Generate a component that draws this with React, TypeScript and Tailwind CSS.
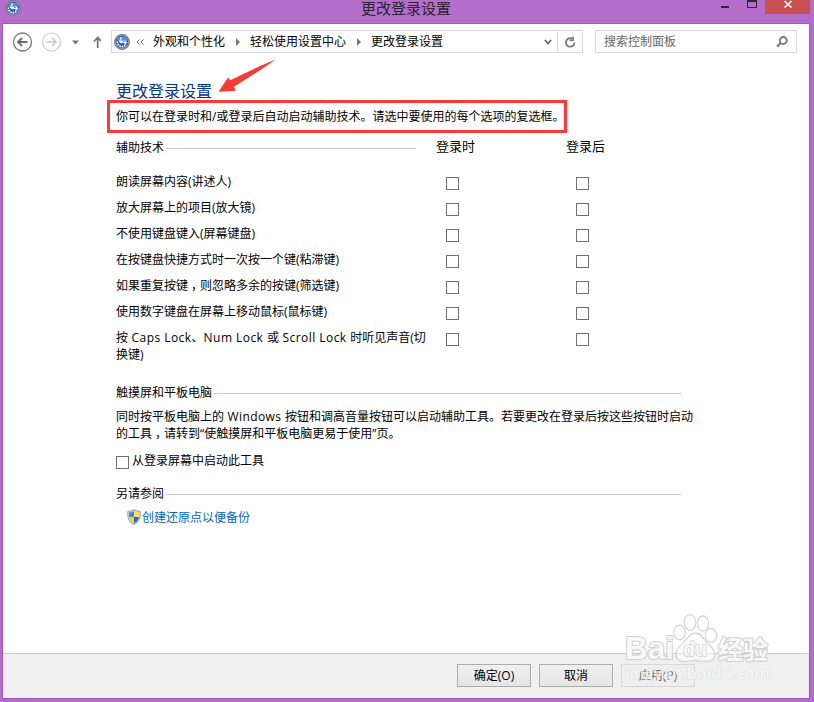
import type { ReactNode } from "react";

function Orb({ className }: { className: string }) {
  return (
    <svg viewBox="0 0 16 16" className={className}>
      <circle cx="8" cy="8" r="7.4" fill="#b9bbc0" stroke="#74777e" strokeWidth="1.1" />
      <circle cx="8" cy="8" r="6" fill="#2b5fd0" stroke="#1f4bb0" strokeWidth=".6" />
      <path d="M2.700 7A5.400 5.400 0 0 1 13.300 7Q8 4.500 2.700 7Z" fill="#5f8ee6" />
      <path d="M3.400 7.500A4.600 4.600 0 0 0 11.500 11" fill="none" stroke="#fff" strokeWidth="1.500" strokeDasharray="1.700 .7" />
      <path d="M7 3V8.500M5 6.500l2.200 2.200L9.500 6.500M8.500 8.500h4.500M10.500 6.500l2 2-2 2" fill="none" stroke="#fff" strokeWidth="1.200" />
    </svg>
  );
}

function Shield() {
  return (
    <svg viewBox="0 0 14 16" className="-mt-0.5 h-4 w-3.5 shrink-0">
      <path d="M7 .6C5 2 3 2.3.8 2.4 .5 8 1.3 13 7 15.5 12.7 13 13.5 8 13.2 2.4 11 2.3 9 2 7 .6Z" fill="#d3d8dd" stroke="#8b9299" strokeWidth=".9" />
      <path d="M7 2C5.400 3 4 3.400 2.100 3.500V8H7Z" fill="#3d8be0" />
      <path d="M7 2C8.600 3 10 3.400 11.900 3.500V8H7Z" fill="#fde04a" />
      <path d="M2.100 8H7v6.200C4 12.800 2.400 11 2.100 8Z" fill="#fbd02a" />
      <path d="M11.900 8H7v6.200C10 12.800 11.600 11 11.900 8Z" fill="#1f6ccb" />
    </svg>
  );
}

function Box() {
  return <span className="block size-[13px] shrink-0 border border-[#707070] bg-white" />;
}

function Section({ title, className }: { title: string; className: string }) {
  return (
    <div className={`flex h-4 items-center ${className}`}>
      <span className="-mt-0.5 whitespace-nowrap">{title}</span>
      <span className="ml-0.5 mt-px h-px flex-1 bg-[#cbcbcb]" />
    </div>
  );
}

function Crumb({ children, className }: { children: ReactNode; className: string }) {
  return <span className={`-mt-px whitespace-nowrap ${className}`}>{children}</span>;
}

function Arrow({ className }: { className: string }) {
  return (
    <svg viewBox="0 0 4 8" className={`h-2 w-1 shrink-0 ${className}`}>
      <path d="M0 0l4 4-4 4Z" fill="#777" />
    </svg>
  );
}

function Comma() {
  return <span className="ml-[3px] -mr-[3px]">，</span>;
}

const options: { id: string; label: ReactNode }[] = [
  { id: "narrator", label: "朗读屏幕内容(讲述人)" },
  { id: "magnifier", label: "放大屏幕上的项目(放大镜)" },
  { id: "keyboard", label: "不使用键盘键入(屏幕键盘)" },
  { id: "sticky", label: "在按键盘快捷方式时一次按一个键(粘滞键)" },
  { id: "filter", label: <>如果重复按键<Comma />则忽略多余的按键(筛选键)</> },
  { id: "mouse", label: "使用数字键盘在屏幕上移动鼠标(鼠标键)" },
];

const dialogButton =
  "flex h-[23px] w-[74px] items-center justify-center border border-[#acacac] bg-linear-to-b from-[#f0f0f0] to-[#e5e5e5]";

function Watermark() {
  return (
    <svg viewBox="0 0 155 90" className="pointer-events-none absolute left-[620px] top-[605px] h-[90px] w-[155px]">
      <g fill="#fff" fillOpacity=".55" stroke="#d6d6d6" strokeWidth="1.300">
        <ellipse cx="59.500" cy="27.500" rx="5.700" ry="7.300" />
        <ellipse cx="70" cy="17.500" rx="5.700" ry="7.800" />
        <ellipse cx="83" cy="18.500" rx="5.700" ry="7.500" />
        <ellipse cx="91" cy="30.500" rx="5.700" ry="7" />
        <path d="M75.500 28C69 28 67 35 61 40 55 45 54 54 61 56 66 57.500 70 55.500 75.500 55.500S85 57.500 90 56C97 54 96 45 89 40 84 35 82 28 75.500 28Z" />
      </g>
      <g fontFamily="'Liberation Sans', Arial, sans-serif" fontWeight="bold" fill="#f8f8f8" stroke="#d2d2d2" strokeWidth="2.200" strokeLinejoin="round" paintOrder="stroke">
        <text x="5" y="54" fontSize="32" textLength="49" lengthAdjust="spacingAndGlyphs">Bai</text>
        <text x="63" y="51" fontSize="20" textLength="24" lengthAdjust="spacingAndGlyphs" strokeWidth="1.600">du</text>
        <text x="98" y="53.500" fontSize="25" textLength="50" fontFamily="'Noto Sans CJK SC', sans-serif">经验</text>
      </g>
      <text x="5" y="74" fontSize="16" textLength="145" lengthAdjust="spacingAndGlyphs" fontFamily="'Open Sans', sans-serif" fontWeight="600" fill="#fff" fillOpacity=".65" stroke="#d0d0d0" strokeOpacity=".45" strokeWidth="1.200" paintOrder="stroke">jingyan.baidu.com</text>
    </svg>
  );
}

export default function App() {
  return (
    <div className="relative flex h-[702px] w-[814px] flex-col overflow-hidden bg-[#b46dcb] font-['Open_Sans','Noto_Sans_CJK_SC',sans-serif] text-[12px] leading-[17px] text-black">
      <header className="flex h-[23px] shrink-0">
        <Orb className="ml-[5px] mt-0 size-4 shrink-0" />
        <h1 className="ml-[340px] h-[18px] w-[92px] shrink-0 whitespace-nowrap text-[15px] leading-[16px] text-[#2b2330]">更改登录设置</h1>
        <svg viewBox="0 0 44 14" className="ml-[267px] h-[14px] w-11 shrink-0">
          <path d="M1 6h8v2H1Z" fill="#2a2a2a" />
          <path d="M27.500 0h9v7.500h-9Z" fill="none" stroke="#2a2a2a" />
          <path d="M27 0h10v2H27Z" fill="#2a2a2a" />
        </svg>
        <div className="ml-px flex h-[14px] w-[45px] shrink-0 justify-center bg-[#c75050]">
          <svg viewBox="0 0 10 10" className="h-[10px] w-[10px]">
            <path d="M1.500 1l7 6.500M8.500 1l-7 6.500" stroke="#fff" strokeWidth="1.700" />
          </svg>
        </div>
      </header>

      <div className="ml-0.5 flex h-[676px] w-[808px] shrink-0 flex-col border border-[#9d59b5] bg-white">
        <nav className="flex h-[29px] shrink-0 items-end">
          <svg viewBox="0 0 98 22" className="h-[22px] w-[98px] shrink-0" fill="none">
            <circle cx="19.500" cy="11" r="9" stroke="#777" strokeWidth="1.300" />
            <path d="M24.500 11h-9M19 7l-4 4 4 4" stroke="#6b6b6b" strokeWidth="1.900" />
            <circle cx="48.500" cy="11" r="9" stroke="#ccc" strokeWidth="1.200" />
            <path d="M43.500 11h9M49 7l4 4-4 4" stroke="#ccc" strokeWidth="1.700" />
            <path d="M69 9.500h7l-3.500 4Z" fill="#777" />
            <path d="M94.700 17V7M90.900 10.500L94.700 6.500 98 10" stroke="#777" strokeWidth="1.800" />
          </svg>
          <div className="ml-[10px] flex h-[23px] w-[472px] items-center border border-[#d9d9d9]">
            <Orb className="ml-0.5 size-4 shrink-0" />
            <svg viewBox="0 0 8 6" className="ml-1.5 h-1.5 w-2 shrink-0" fill="none" stroke="#666">
              <path d="M3.500.5L1 3l2.500 2.500M7.500.5L5 3l2.500 2.500" />
            </svg>
            <Crumb className="ml-[9px] w-[73px]">外观和个性化</Crumb>
            <Arrow className="ml-[10px]" />
            <Crumb className="ml-[10px] w-[97px]">轻松使用设置中心</Crumb>
            <Arrow className="ml-[10px]" />
            <Crumb className="ml-[10px]">更改登录设置</Crumb>
            <svg viewBox="0 0 8 6" className="ml-auto mr-[5px] h-1.5 w-2 shrink-0">
              <path d="M.8 1L4 4.400 7.200 1" fill="none" stroke="#666" strokeWidth="1.700" />
            </svg>
            <div className="flex h-full w-[25px] items-center justify-center border-l border-[#d9d9d9]">
              <svg viewBox="0 0 12 12" className="size-3" fill="none" stroke="#777" strokeWidth="1.700">
                <path d="M8.500 2.800A4.300 4.300 0 1 0 10.500 6.500" />
                <path d="M5.500 4.300H9.200V.5" strokeWidth="1.500" />
              </svg>
            </div>
          </div>
          <div className="ml-3 flex h-[23px] w-[202px] items-center justify-between border border-[#d9d9d9] pl-2 pr-2 text-[#666]">
            <span>搜索控制面板</span>
            <svg viewBox="0 0 12 12" className="size-3" fill="none" stroke="#777">
              <circle cx="7.300" cy="4.500" r="3.500" strokeWidth="1.800" />
              <path d="M4.700 7L1 10.600" strokeWidth="2.200" />
            </svg>
          </div>
        </nav>

        <main className="ml-[113px] flex h-[600px] w-[580px] shrink-0 flex-col">
          <h2 className="mt-[28px] h-[19px] whitespace-nowrap text-[16px] leading-5 text-[#003399]">更改登录设置</h2>
          <div className="-ml-[9px] flex h-[33px] w-[460px] shrink-0 items-center whitespace-nowrap border-[3px] border-[#ff3838] pl-1.5">
            你可以在登录时和/或登录后自动启动辅助技术。请选中要使用的每个选项的复选框。
          </div>
          <div className="mt-1 flex h-[18px] shrink-0 text-[13px]">
            <Section title="辅助技术" className="mt-[3px] w-[300px] text-[12px]" />
            <span className="ml-5 mt-px w-[130px]">登录时</span>
            <span className="mt-px">登录后</span>
          </div>
          <div className="mt-[18px] flex shrink-0 flex-col">
            {options.map(({ id, label }) => (
              <div key={id} className="flex h-[26px]">
                <span className="w-[330px] whitespace-nowrap">{label}</span>
                <div className="mt-1 flex gap-[117px]"><Box /><Box /></div>
              </div>
            ))}
            <div className="flex h-[37px]">
              <p className="w-[330px] whitespace-nowrap">按<span className="tracking-[0.45px]"> Caps Lock</span>、<span className="tracking-[0.45px]">Num Lock </span>或<span className="tracking-[0.45px]"> Scroll Lock </span>时听见声音(切<br />换键)</p>
              <div className="mt-1 flex gap-[117px]"><Box /><Box /></div>
            </div>
          </div>
          <Section title="触摸屏和平板电脑" className="mt-[19px] w-[565px] shrink-0" />
          <p className="mt-[7px] h-[34px] shrink-0 whitespace-nowrap">同时按平板电脑上的<span className="tracking-[0.4px]"> Windows </span>按钮和调高音量按钮可以启动辅助工具。若要更改在登录后按这些按钮时启动<br />的工具<Comma />请转到“使触摸屏和平板电脑更易于使用”页。</p>
          <label className="mt-[10px] flex h-[17px] shrink-0 gap-[3px]">
            <span className="mt-1"><Box /></span>从登录屏幕中启动此工具
          </label>
          <Section title="另请参阅" className="mt-[17px] w-[565px] shrink-0" />
          <a className="ml-[11px] mt-[7px] flex h-[17px] shrink-0 items-center gap-px text-[#0066cc]"><Shield />创建还原点以便备份</a>
        </main>

        <footer className="flex h-[45px] shrink-0 gap-2 border-t border-[#c8c8c8] bg-[#f0f0f0] pl-[454px] pt-[10px]">
          <button className={dialogButton}>确定(O)</button>
          <button className={dialogButton}>取消</button>
          <button className="flex h-[23px] w-[74px] items-center justify-center border border-[#d9d9d9] bg-[#efefef] text-[#606060]">应用(P)</button>
        </footer>
      </div>

      <svg viewBox="0 0 60 36" className="absolute left-[217px] top-[58px] h-9 w-[60px]">
        <path d="M1.500 33.700L11 19.400l2.200 2.800Q27 15.500 43 8L59 1.300Q51 7 43 12.300L17 28.700l1.700 4Z" fill="#f93b38" />
      </svg>
      <Watermark />
    </div>
  );
}
